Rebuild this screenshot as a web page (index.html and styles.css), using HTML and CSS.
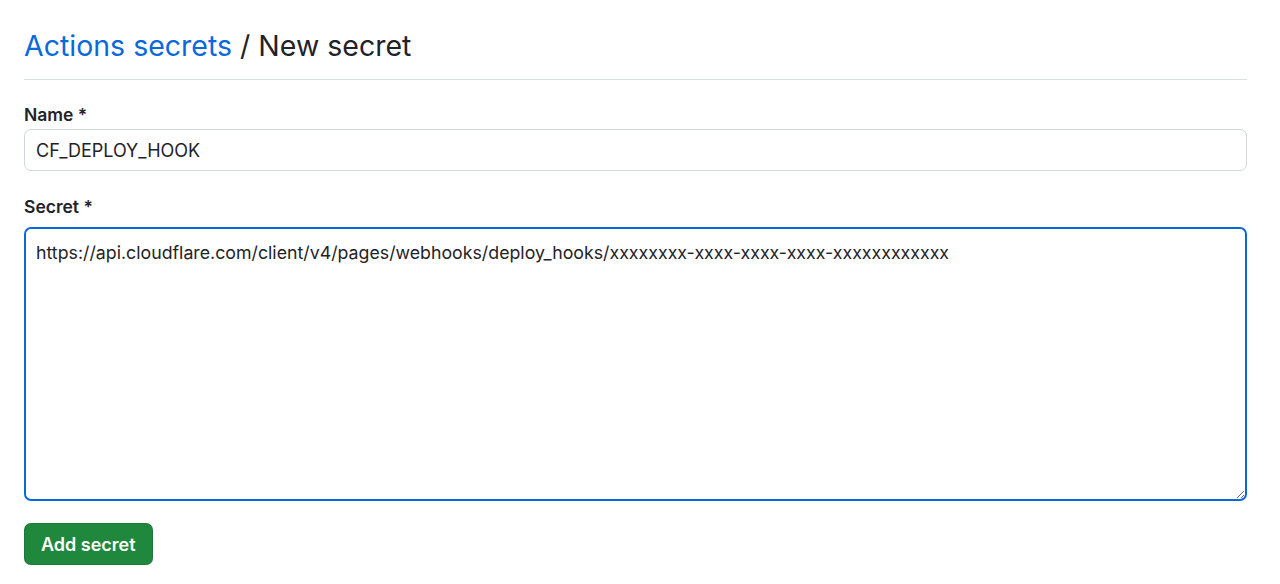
FILE: index.html
```html
<!DOCTYPE html>
<html>
<head>
<meta charset="utf-8">
<link rel="stylesheet" href="styles.css">
</head>
<body>
<div class="page">
  <div class="subhead">
    <h2 class="subhead-heading"><a class="crumb" href="#">Actions secrets</a> / New secret</h2>
  </div>
  <form class="form">
    <div class="field field-name">
      <label class="label" for="name">Name *</label>
      <input class="input" id="name" type="text" value="CF_DEPLOY_HOOK">
    </div>
    <div class="field field-secret">
      <label class="label" for="secret">Secret *</label>
      <textarea class="textarea" id="secret">https://api.cloudflare.com/client/v4/pages/webhooks/deploy_hooks/xxxxxxxx-xxxx-xxxx-xxxx-xxxxxxxxxxxx</textarea>
    </div>
    <button class="btn-primary" type="button">Add secret</button>
  </form>
</div>
</body>
</html>
```
FILE: styles.css
```css
html, body {
  margin: 0;
  padding: 0;
  background: #ffffff;
}
body {
  font-family: Inter, "Liberation Sans", sans-serif;
  color: #1f2328;
}
.page {
  width: 1223px;
  padding: 24px 0 0 24px;
}
.subhead {
  border-bottom: 1px solid #d8dee4;
  padding-bottom: 11px;
  display: flex;
}
.subhead-heading {
  margin: 0;
  font-size: 28.5px;
  font-weight: 400;
  line-height: 44px;
}
.crumb {
  color: #0969da;
  text-decoration: none;
}
.form {
  display: flex;
  flex-direction: column;
  align-items: flex-start;
  padding-top: 23px;
}
.field {
  width: 100%;
  display: flex;
  flex-direction: column;
}
.field-name {
  margin-bottom: 24px;
}
.field-name .label {
  margin-bottom: 2px;
}
.field-secret .label {
  margin-bottom: 8px;
}
.label {
  font-size: 17.5px;
  font-weight: 600;
  line-height: 24px;
}
.input {
  box-sizing: border-box;
  height: 42px;
  width: 100%;
  padding: 0 11px;
  font-family: Inter, "Liberation Sans", sans-serif;
  font-size: 18px;
  color: #1f2328;
  border: 1px solid #d0d7de;
  border-radius: 7px;
  background: #ffffff;
  outline: none;
}
.textarea {
  box-sizing: border-box;
  height: 274px;
  width: 100%;
  padding: 14px 10px;
  font-family: Inter, "Liberation Sans", sans-serif;
  font-size: 17.75px;
  line-height: 20px;
  color: #1f2328;
  border: 2px solid #0969da;
  border-radius: 7px;
  background: #ffffff;
  outline: none;
  resize: vertical;
}
.btn-primary {
  margin-top: 22px;
  height: 42px;
  padding: 0 16px;
  font-family: Inter, "Liberation Sans", sans-serif;
  font-size: 18px;
  font-weight: 600;
  color: #ffffff;
  background: #1f883d;
  border: 1px solid rgba(31, 35, 40, 0.15);
  border-radius: 7px;
  box-shadow: 0 1px 0 rgba(31, 35, 40, 0.1);
}
```
